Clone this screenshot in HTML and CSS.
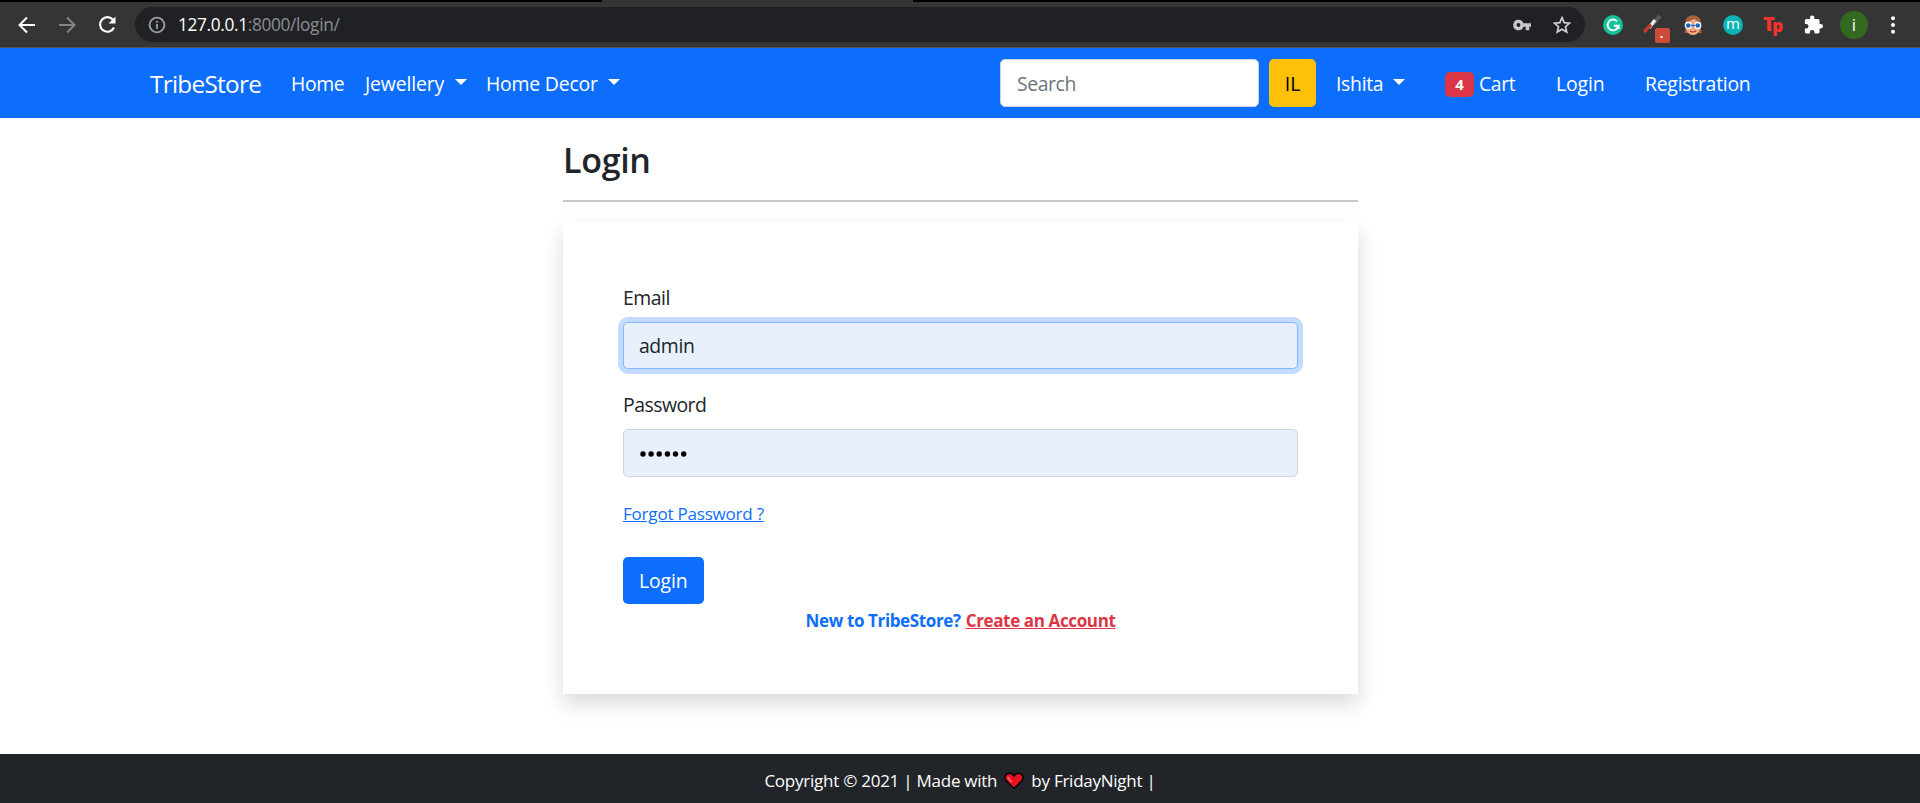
FILE: index.html
```html
<!DOCTYPE html>
<html lang="en">
<head>
<meta charset="utf-8">
<title>TribeStore | Login</title>
<link rel="stylesheet" href="styles.css">
</head>
<body>
<div class="tabstrip"><div class="tab"></div></div>
<div class="browser">
  <svg class="ico back" width="18" height="18" viewBox="0 0 18 18"><path d="M17 9H2M9 1.5L1.5 9 9 16.5"/></svg>
  <svg class="ico fwd" width="18" height="18" viewBox="0 0 18 18"><path d="M1 9h15M9 1.5L16.500 9 9 16.500"/></svg>
  <svg class="ico reload" width="20" height="20" viewBox="0 0 20 20"><path d="M16.200 5A7.300 7.300 0 1 0 17 12.500"/><path class="solid" d="M18.500 1.500v7h-7z"/></svg>
  <div class="address">
    <svg class="ico info" width="18" height="18" viewBox="0 0 18 18"><circle cx="9" cy="9" r="7.400"/><path d="M9 8v5M9 4.800v2"/></svg>
    <span class="t url">127.0.0.1<span class="path">:8000/login/</span></span>
    <svg class="key" width="18" height="12" viewBox="0 0 18 12"><path fill-rule="evenodd" d="M5.500.7a5.300 5.300 0 0 1 5 3.500H18v3.600h-1.700v3.500h-3.600V7.800h-2.200a5.300 5.300 0 1 1-5-7.100zm0 3.400a1.900 1.900 0 1 0 0 3.800 1.900 1.900 0 0 0 0-3.800z"/></svg>
    <svg class="ico star" width="18" height="18" viewBox="0 0 18 18"><path d="M9 1.700l2.200 5 5.300.5-4 3.500 1.200 5.300L9 13.200 4.300 16l1.200-5.300-4-3.500 5.300-.5z"/></svg>
  </div>
  <div class="ext">
    <svg class="e1" width="20" height="20" viewBox="0 0 20 20"><circle cx="10" cy="10" r="10" fill="#15c39a"/><path d="M14 6.300A5.400 5.400 0 1 0 15.300 11M11 10.800h4.700V14" fill="none" stroke="#fff" stroke-width="1.900"/></svg>
    <svg class="e2" width="27" height="28" viewBox="0 0 27 28"><path d="M10 9L17 1" stroke="#5a5a5a" stroke-width="4"/><path d="M6 13l6-8" stroke="#e8e8e8" stroke-width="3.500"/><path d="M1 17l7-7.500" stroke="#c0392b" stroke-width="3.500"/><rect x="12" y="13" width="15" height="15" rx="2" fill="#cc4b3b"/><rect x="17.500" y="21" width="2" height="2" fill="#fff"/></svg>
    <svg class="e3" width="20" height="20" viewBox="0 0 20 20"><path d="M1 18C4 15 1 8 3 4 6-1 14-1 17 4c2 4 0 11 2 14z" fill="#a5623a"/><path d="M3 8l8-4 6 4v6q-2 6-7 6t-7-6z" fill="#f0a884"/><path d="M7 16q3 2 6 0" fill="none" stroke="#a33" stroke-width="1.200"/><g fill="#1c67b5" stroke="#fff" stroke-width="1.300"><circle cx="5.300" cy="10.500" r="3"/><circle cx="14.700" cy="10.500" r="3"/></g><path d="M8 10.500h4" stroke="#1c67b5" stroke-width="1.500"/></svg>
    <span class="e4">m</span>
    <span class="e5">T<span>p</span></span>
    <svg class="e6" width="19" height="19" viewBox="1.500 0.500 21 22"><path fill="#fff" d="M20.500 11H19V7c0-1.100-.9-2-2-2h-4V3.500a2.500 2.500 0 0 0-5 0V5H4c-1.100 0-2 .9-2 2v3.800h1.500a2.700 2.700 0 0 1 0 5.400H2V20c0 1.100.9 2 2 2h3.800v-1.500a2.700 2.700 0 0 1 5.400 0V22H17c1.100 0 2-.9 2-2v-4h1.500a2.500 2.500 0 0 0 0-5z"/></svg>
    <span class="avatar">i</span>
    <svg class="dots" width="4" height="18" viewBox="0 0 4 18"><g fill="#fff"><circle cx="2" cy="2.200" r="2"/><circle cx="2" cy="9" r="2"/><circle cx="2" cy="15.800" r="2"/></g></svg>
  </div>
</div>
<nav class="navbar">
  <a class="t brand">TribeStore</a>
  <a class="t home">Home</a>
  <a class="t jewel">Jewellery</a><i class="caret c1"></i>
  <a class="t decor">Home Decor</a><i class="caret c2"></i>
  <div class="nav-right">
    <div class="search"><span class="t">Search</span></div>
    <div class="il"><span class="t">IL</span></div>
    <a class="t user">Ishita</a><i class="caret c3"></i>
    <span class="badge">4</span>
    <a class="t cart">Cart</a>
    <a class="t nlogin">Login</a>
    <a class="t reg">Registration</a>
  </div>
</nav>
<main class="main">
  <h3 class="title"><span class="t">Login</span></h3>
  <hr class="rule">
  <form class="card">
    <label class="label"><span class="t email">Email</span></label>
    <div class="input focus"><span class="t admin">admin</span></div>
    <label class="label second"><span class="t password">Password</span></label>
    <div class="input"><svg width="48" height="6" viewBox="0 0 48 6"><g fill="#000"><circle cx="3" cy="3" r="2.700"/><circle cx="11.100" cy="3" r="2.700"/><circle cx="19.200" cy="3" r="2.700"/><circle cx="27.400" cy="3" r="2.700"/><circle cx="35.500" cy="3" r="2.700"/><circle cx="43.700" cy="3" r="2.700"/></g></svg></div>
    <div class="forgot"><a class="t">Forgot Password ?</a></div>
    <div class="btn"><span class="t">Login</span></div>
    <div class="signup"><span class="t new">New to TribeStore?</span><a class="t create">Create an Account</a></div>
  </form>
</main>
<footer class="footer">
  <span class="t copy">Copyright © 2021 | Made with</span>
  <svg class="heart" width="20" height="18" viewBox="0 0 20 18"><path d="M10 16.500L2 8.500C-.5 5 2 1.300 5.300 1.300 7.500 1.300 9 2.500 10 4c1-1.500 2.500-2.700 4.700-2.700C18 1.300 20.500 5 18 8.500z" fill="#e81224" stroke="#000" stroke-width="1.500"/><path d="M4 5q1 3 4 5" fill="none" stroke="#f4645f" stroke-width="2"/></svg>
  <span class="t by">by FridayNight |</span>
</footer>
</body>
</html>
```
FILE: styles.css
```css
* { box-sizing: border-box; }
body { margin: 0; width: 1920px; height: 803px; overflow: hidden; display: flex; flex-direction: column; background: #fff; color: #212529; font: 19.4px/30px "Open Sans", "Noto Sans", sans-serif; }
.t { display: inline-block; white-space: nowrap; flex: none; }
svg { display: block; flex: none; }

.tabstrip { height: 2px; flex: none; background: #000; }
.tab { width: 311px; height: 2px; margin-left: 602px; background: #353535; }
.browser { height: 46px; flex: none; background: #353535; border-bottom: 1px solid #555; display: flex; align-items: center; padding-left: 18px; }
.ico { fill: none; stroke: #fff; stroke-width: 2; }
.ico .solid { fill: #fff; stroke: none; }
.fwd { stroke: #858585; margin-left: 22px; }
.reload { margin-left: 21px; stroke-width: 2.2; }
.address { margin-left: 18px; width: 1450px; height: 35px; border-radius: 18px; background: #202124; display: flex; align-items: center; padding-left: 13px; }
.info { stroke: #9aa0a6; stroke-width: 1.8; }
.url { width: 164px; margin-left: 12px; color: #fff; font-size: 17.3px; letter-spacing: -.35px; }
.path { color: #8b8e92; }
.key { margin-left: 1171px; fill: #c7c7c7; }
.star { margin-left: 22px; stroke: #d0d0d0; stroke-width: 1.7; }
.ext { display: flex; align-items: center; margin-left: 18px; }
.e2 { margin-left: 20px; margin-top: 9px; }
.e3 { margin-left: 13px; }
.e4 { margin-left: 20px; width: 20px; height: 20px; border-radius: 50%; background: #0cb4b4; color: #fff; font-size: 15px; line-height: 17px; text-align: center; }
.e5 { margin-left: 20px; width: 19px; color: #f5332e; font: 900 20px/22px "Open Sans", sans-serif; letter-spacing: -2.5px; display: flex; }
.e5 span { font-size: 17px; padding-top: 2px; }
.e6 { margin-left: 22px; }
.avatar { margin-left: 17px; width: 28px; height: 28px; border-radius: 50%; background: #33691e; color: #fff; font-size: 17px; line-height: 27px; text-align: center; }
.dots { margin-left: 23px; }

.navbar { height: 70px; flex: none; background: #0d6efd; color: #fff; display: flex; align-items: center; padding-left: 150px; }
.navbar > .t, .nav-right > .t { padding-top: 1px; }
.brand { width: 112px; font-size: 24.3px; letter-spacing: -.7px; }
.navbar > .brand { padding-top: 2px; }
.home { width: 55px; margin-left: 29px; letter-spacing: -.4px; }
.jewel { width: 82px; margin-left: 19px; letter-spacing: -.15px; }
.decor { width: 112px; margin-left: 19px; letter-spacing: -.2px; }
.caret { flex: none; border: 6px solid transparent; border-top-color: #fff; border-bottom: 0; margin-bottom: 3px; }
.c1 { margin-left: 8px; }
.c2 { margin-left: 10px; }
.nav-right { margin-left: 380px; display: flex; align-items: center; }
.search { width: 259px; height: 48px; background: #fff; border: 1px solid #ced4da; border-radius: 5px; color: #6c757d; padding: 9px 16px; letter-spacing: -.4px; }
.il { width: 47px; height: 48px; margin-left: 10px; background: #ffc107; border-radius: 5px; color: #000; padding: 10px 0; text-align: center; }
.user { width: 49px; margin-left: 20px; letter-spacing: -.3px; }
.c3 { margin-left: 8px; }
.badge { width: 29px; height: 25px; margin-left: 40px; margin-top: 2px; border-radius: 5px; background: #dc3545; font-weight: 700; font-size: 15px; line-height: 25px; text-align: center; }
.cart { width: 39px; margin-left: 5px; letter-spacing: -.4px; }
.nlogin { width: 50px; margin-left: 38px; letter-spacing: -.1px; }
.reg { margin-left: 39px; letter-spacing: -.25px; }

.main { width: 795px; margin-left: 563px; height: 636px; flex: none; }
.title { margin: 21px 0 0; height: 61px; font-size: 34px; line-height: 42px; font-weight: 600; letter-spacing: -.3px; }
.rule { margin: 0; border: 0; height: 2px; background: #c8c8c8; }
.card { margin-top: 20px; height: 472px; padding: 61px 60px 0; background: #fff; box-shadow: 0 10px 20px rgba(0, 0, 0, .15); }
.label { display: block; height: 39px; letter-spacing: -.5px; }
.focus + .second { margin-top: 21px; height: 39px; }
.input { height: 48px; border: 1px solid #ced4da; border-radius: 5px; background: #e8f0fe; padding: 8px 15px; color: #212529; letter-spacing: -.4px; }
.input svg { margin-top: 13px; margin-left: 1px; }
.focus { height: 47px; border-color: #86b7fe; box-shadow: 0 0 0 5px rgba(13, 110, 253, .25); }
.forgot { margin-top: 22px; height: 58px; color: #0d6efd; font-size: 17px; letter-spacing: -.2px; }
.forgot .t, .create { text-decoration: underline; }
.btn { width: 81px; height: 47px; background: #0d6efd; color: #fff; border-radius: 5px; padding: 9px 16px; letter-spacing: -.1px; }
.signup { display: flex; justify-content: center; gap: 5px; font-size: 17px; font-weight: 700; line-height: 33px; color: #0d6efd; letter-spacing: -.37px; }
.create { color: #dc3545; }

.footer { height: 49px; flex: none; background: #212529; color: #fff; display: flex; justify-content: center; align-items: center; padding-top: 5px; font-size: 17px; letter-spacing: -.25px; }
.heart { margin: 0 7px; }
```
